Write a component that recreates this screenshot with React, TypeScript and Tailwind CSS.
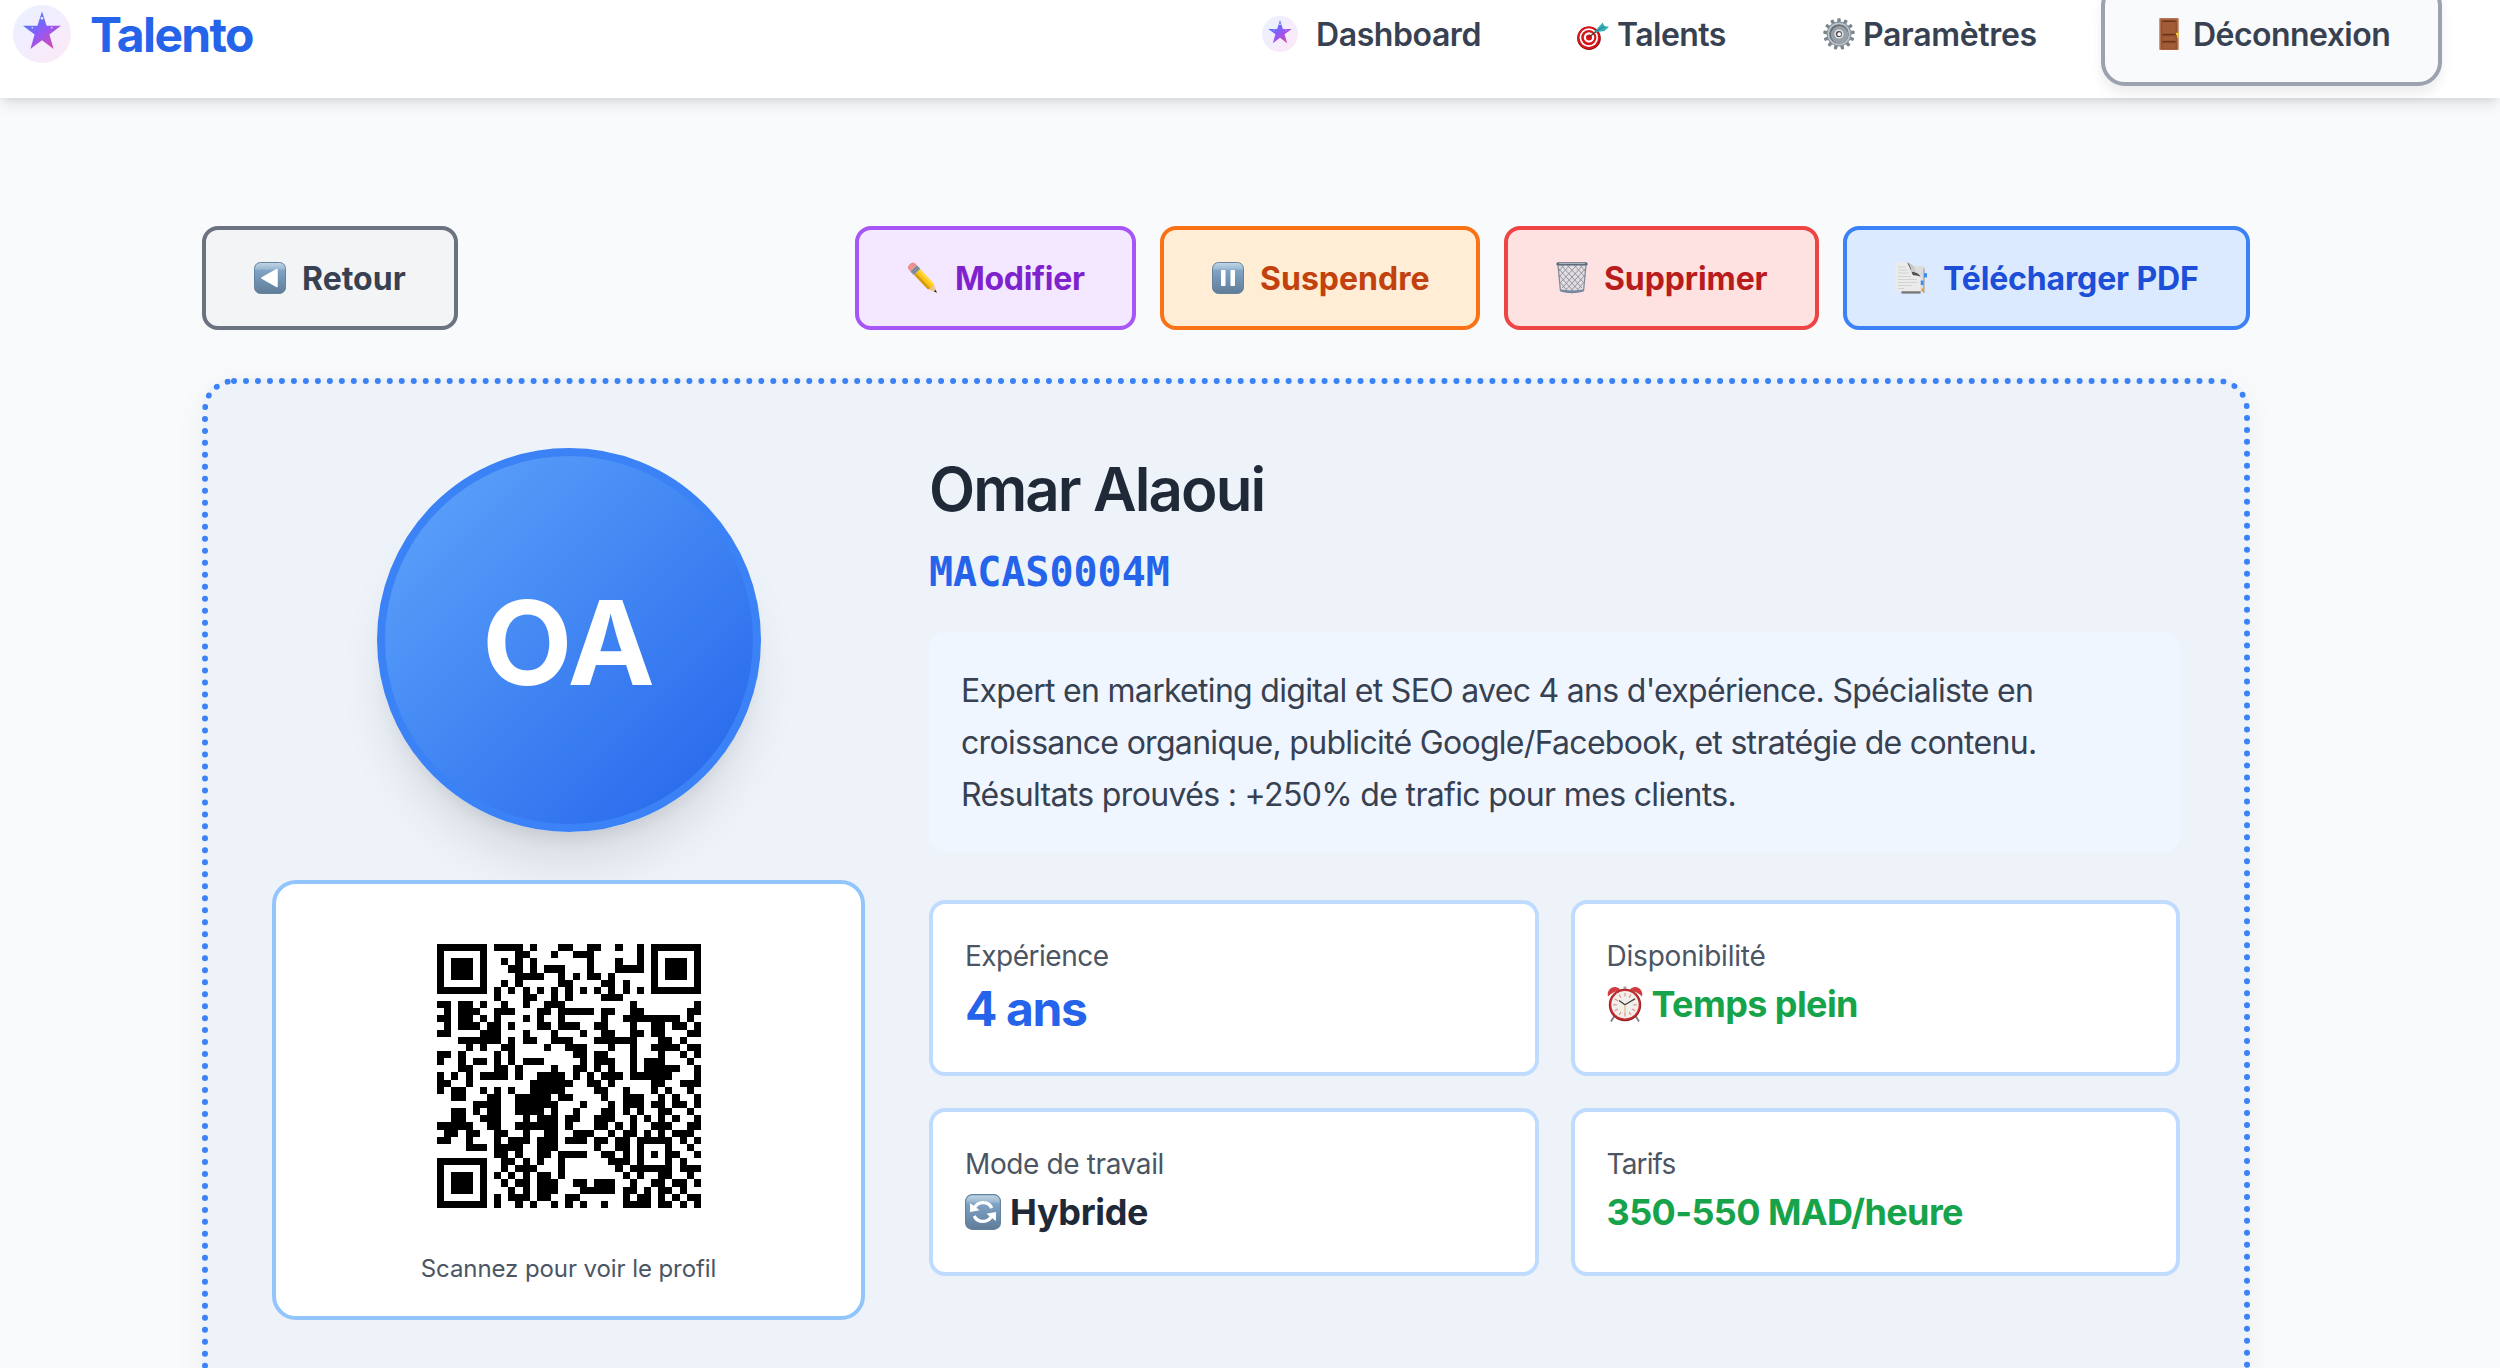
import type { ReactNode } from "react";

function StarBadge({ size, id }: { size: number; id: string }) {
  return (
    <svg width={size} height={size} viewBox="0 0 58 58" className="shrink-0">
      <defs>
        <linearGradient id={id + "-bg"} x1="0" y1="0" x2="1" y2="1">
          <stop offset="0" stopColor="#e8f1ff" />
          <stop offset="0.5" stopColor="#f3edfe" />
          <stop offset="1" stopColor="#fde8f3" />
        </linearGradient>
        <linearGradient id={id + "-fg"} x1="0.15" y1="0.1" x2="0.85" y2="1">
          <stop offset="0" stopColor="#3f82f8" />
          <stop offset="0.5" stopColor="#9259f7" />
          <stop offset="1" stopColor="#e0489f" />
        </linearGradient>
      </defs>
      <circle cx="29" cy="29" r="29" fill={`url(#${id}-bg)`} />
      <path
        d="M29 6.5 33.6 20.8H48L36.4 29.6 40.6 44 29 35.2 17.4 44 21.6 29.6 10 20.8H24.4Z"
        fill={`url(#${id}-fg)`}
      />
      <circle cx="29" cy="13.3" r="1.3" fill="#fff" opacity="0.9" />
      <circle cx="19.3" cy="22.7" r="1" fill="#fff" opacity="0.6" />
      <circle cx="38.7" cy="22.7" r="1" fill="#fff" opacity="0.6" />
    </svg>
  );
}

function Target() {
  return (
    <svg width="32" height="32" viewBox="0 0 32 32" className="shrink-0">
      <ellipse cx="12" cy="20.300" rx="11.800" ry="11.700" fill="#8f0f0f" />
      <ellipse cx="11.600" cy="19.800" rx="11.300" ry="11.300" fill="#d5161a" />
      <ellipse cx="11.800" cy="19.600" rx="9.300" ry="9.300" fill="#fff" />
      <ellipse cx="11.800" cy="19.600" rx="7.600" ry="7.600" fill="#d5161a" />
      <ellipse cx="12" cy="19.400" rx="5.200" ry="5.200" fill="#fff" />
      <ellipse cx="12" cy="19.400" rx="3" ry="3" fill="#d5161a" />
      <path d="M12 19 20 13" stroke="#5b3330" strokeWidth="1.400" />
      <path d="M17 14.500 22.500 8 25.800 4.500l1.400 3.500L32 8.700l-4.500 4.300-6 .8Z" fill="#33adb8" />
      <path d="M17.500 14.300 27.500 8.300" stroke="#1d7f8c" strokeWidth="1" />
    </svg>
  );
}

const TEETH = [0, 27.7, 55.4, 83.1, 110.8, 138.5, 166.2, 193.8, 221.5, 249.2, 276.9, 304.6, 332.3];

function Gear() {
  return (
    <svg width="32" height="32" viewBox="0 0 32 32" className="shrink-0">
      {TEETH.map((a) => (
        <rect key={a} x="14.300" y="0.200" width="3.400" height="6" rx="1" fill="#7c868f" transform={`rotate(${a} 16 16)`} />
      ))}
      <circle cx="16" cy="16" r="12.400" fill="#88929b" />
      <circle cx="16" cy="16" r="11.300" fill="#bfc6cc" />
      <circle cx="16" cy="16" r="9.800" fill="#697178" />
      <circle cx="16.600" cy="16.800" r="8.700" fill="#98a1a9" />
      <circle cx="16" cy="16" r="4.600" fill="#dfe4e8" />
      <circle cx="16" cy="16" r="3.100" fill="#54494a" />
      <circle cx="16.300" cy="16.200" r="1.900" fill="#fff" />
    </svg>
  );
}

function Door() {
  return (
    <svg width="32" height="32" viewBox="0 0 32 32" className="shrink-0">
      <rect x="6.300" y="0" width="19.400" height="32" rx="0.800" fill="#b87657" />
      <rect x="7.800" y="1.500" width="16.400" height="30" fill="#96512f" />
      <rect x="9.500" y="3" width="13" height="13" fill="#a35c38" />
      <path d="M9.500 3.300h13M9.500 16.500h13M9.500 23.700h13" stroke="#6b3218" strokeWidth="1.300" />
      <rect x="9.500" y="18.500" width="13" height="4" fill="#a35c38" />
      <rect x="9.500" y="25.500" width="13" height="5" fill="#a35c38" />
      <path d="M23 14.700h2.600v5H24v-2.800h-1z" fill="#f0c92b" />
    </svg>
  );
}

function Tile({ size, id, children }: { size: number; id: string; children: ReactNode }) {
  return (
    <svg width={size} height={size} viewBox="0 0 32 32" className="shrink-0">
      <defs>
        <linearGradient id={id} x1="0" y1="0" x2="0" y2="1">
          <stop offset="0" stopColor="#c3d7e6" />
          <stop offset="0.2" stopColor="#9dbad2" />
          <stop offset="0.260" stopColor="#7fa3c6" />
          <stop offset="1" stopColor="#5f7c97" />
        </linearGradient>
      </defs>
      <rect x="0.500" y="0.500" width="31" height="31" rx="6" fill={`url(#${id})`} stroke="#64839f" />
      {children}
    </svg>
  );
}

function Pencil() {
  return (
    <svg width="32" height="32" viewBox="0 0 32 32" className="shrink-0">
      <g transform="translate(3.800 3.300) rotate(46.500)">
        <path d="M29 -4.300 37.500 0 29 4.300Z" fill="#eec48f" />
        <path d="M34.800 -1.300 38 0 34.800 1.300Z" fill="#2c2c2c" />
        <path d="M9 -4.300H29L30.500 -2.700 29 -1.300H9Z" fill="#ffd83c" />
        <path d="M9 -1.600H29.500L30.500 0 29.500 1.600H9Z" fill="#fcc40f" />
        <path d="M9 1.400H29.500L30 2.800 29 4.300H9Z" fill="#d69a0a" />
        <rect x="3.800" y="-4.500" width="5.400" height="9" fill="#8d99a6" />
        <path d="M5.500 -4.500v9M7.500 -4.500v9" stroke="#5d6873" strokeWidth="0.700" />
        <path d="M4 -4.500H1.500a3.500 3.500 0 0 0-3 3.500v2a3.500 3.500 0 0 0 3 3.500H4Z" fill="#ef8f8f" />
      </g>
    </svg>
  );
}

function Trash() {
  return (
    <svg width="32" height="32" viewBox="0 0 32 32" className="shrink-0">
      <path d="M1.500 2h29L27.800 28.500q0 2.800-11.800 2.800T4.200 28.500Z" fill="#e3dde2" />
      <path
        d="M2 6 24 30M3 13 19 31M4 20l9 11M5 3l21 23M11 3l16 17M18 3l11 12M24 3l5 6M30 6 8 30M29 13 13 31M28 20l-9 11M27 3 6 26M21 3 5 20M14 3 3 15M8 3 3 9"
        stroke="#7d8592"
        strokeWidth="0.800"
        fill="none"
      />
      <path d="M2 3 4.400 28.500M30 3l-2.400 25.500" stroke="#848d9a" strokeWidth="1.300" />
      <path d="M4 27.300q12 2.600 24 0l-.3 2.200q-11.700 3.500-23.400 0Z" fill="#75879c" />
      <rect x="0.400" y="0.300" width="31.200" height="3.200" rx="1.500" fill="#5e6b7a" />
      <rect x="3" y="1" width="26" height="1" rx="0.500" fill="#aab4bf" />
    </svg>
  );
}

function Pages() {
  return (
    <svg width="32" height="32" viewBox="0 0 32 32" className="shrink-0">
      <path d="M10 4h19.500v26.500H10z" fill="#dcdcdc" />
      <path d="M28 6.500h1.800V31H28z" fill="#b5b5b5" />
      <rect x="29" y="11" width="3" height="4.500" rx="0.500" fill="#3c8ff0" />
      <rect x="25.500" y="18.500" width="3" height="4.500" fill="#3c8ff0" />
      <rect x="26.500" y="26.500" width="2.500" height="3" fill="#f39a3c" />
      <path d="M6.500 29h19v2.600h-19z" fill="#777" />
      <path d="M.5.300H12q3.800 1.700 4.500 9.500 7 .6 9 5v14.500H.5z" fill="#ebebeb" />
      <path d="M12 .3q3.800 1.700 4.500 9.500Q15 6 12 .3Z" fill="#555" />
      <path d="M12 .3q5.500 1 7.500 5.500 1.200 2.600.8 4.300-2-.6-3.800-.3Q15.800 2 12 .3Z" fill="#c9c9c9" />
      <path d="M16.500 9.800q7 .3 9 5-3-1.800-7.500-1.500Q17 11.500 16.500 9.800Z" fill="#4f4f4f" />
      <path d="M3 5h8M3 8h10M3 11h11M3 14.500h13M3 17.500h19M3 20.500h19M3 23.500h14M3 26.500h6" stroke="#d2d2d2" strokeWidth="1" />
    </svg>
  );
}

function Clock() {
  return (
    <svg width="36" height="36" viewBox="0 0 36 36" className="shrink-0">
      <path d="m8 29-4 6.500M28 29l4 6.500" stroke="#7d7d7d" strokeWidth="1.800" />
      <rect x="16.500" y="0.500" width="3" height="4" fill="#a8a8a8" />
      <path d="M1 10.500C-.5 5 4 0 9.500 1.200q3 .8 3.500 2.600Q5 6.500 1 10.500Z" fill="#cf3b3e" />
      <path d="M35 10.500C36.500 5 32 0 26.500 1.200q-3 .8-3.500 2.600 8 2.700 12 6.700Z" fill="#cf3b3e" />
      <circle cx="18" cy="19" r="16.200" fill="#8e1d22" />
      <circle cx="18" cy="18.700" r="15.600" fill="#c22b30" />
      <circle cx="18" cy="18.800" r="13.700" fill="#f1efec" />
      {[0, 30, 60, 90, 120, 150, 180, 210, 240, 270, 300, 330].map((a) => (
        <path key={a} d="M18 7v3.600" stroke="#ec8884" strokeWidth="1.100" transform={`rotate(${a} 18 18.800)`} />
      ))}
      <path d="M18 18.800 12 14.500M18 18.800l10-6" stroke="#3a3a3a" strokeWidth="1.200" />
      <path d="M18 18.800V28" stroke="#d9a53f" strokeWidth="0.800" />
    </svg>
  );
}

/* Dark modules of the 37x37 code, one entry per row, as inclusive column ranges. */
const QR_ROWS = [
  "0-6 8-11 13 17-18 21-22 25 28 30-36",
  "0 6 11-12 16 19-21 28 30 36",
  "0 2-4 6 9 11 13 21 25 28 30 32-34 36",
  "0 2-4 6 10-11 13 15-17 21 25-28 30 32-34 36",
  "0 2-4 6 11-14 17 19 21-22 24 30 32-34 36",
  "0 6 9 11 17-18 23-24 26 30 36",
  "0-6 8 10 12 14 16 18 20 22 24 26 28 30-36",
  "8 12-13 16 18 23-25",
  "0-1 3-4 6 9 12 15-17 27 36",
  "1 3-5 8-10 14-15 17-21 23-24 27-28 35-36",
  "0-1 3-4 6 8 12 14 17 23 26-33 35",
  "1 3-5 7-8 10 14-15 17-19 22-23 27 30-31 33-34 36",
  "0-1 6-8 12 16 20 23-24 27-28 30-31 35-36",
  "3-8 10 12-13 16-18 22-26 27 31-32 34",
  "4 6 9-10 15 18-20 24 27 30-33 35-36",
  "0-1 3 8 10 19-20 22-23 27 31 34 36",
  "0 3 5-6 8 10 12-14 20 22-24 27 29-31 35",
  "3-4 8-9 11 16 19-20 22 24 27 29-33 36",
  "0 2 4 6-9 11 14-17 19 21 23-25 27-32 36",
  "0-1 4 13-18 21 22 24 30-31 34-36",
  "0 2-3 6 8 10 13-17 22-23 26 30 32 35",
  "2-3 7-8 11-15 17-18 23 26-28 31 33 36",
  "5-8 11-16 20 24 26-28 30-31 33-34 36",
  "2-3 5 7-8 11-14 16 19 23-24 26 28 31-32 35",
  "2-3 6-8 12 14-16 18-19 22-24 27 29 31 33 36",
  "0-4 7-8 11-16 18 22-23 25 27 30-32 35-36",
  "1-2 4-5 8-9 12 15-16 19-21 24 26-27 29 31 33-35",
  "0-1 4 8 10-12 14-16 18-20 22-23 25-26 28-32 34 36",
  "4-6 8-11 14-16 22 25-26 28 32 35",
  "8-9 11 14-15 17-20 23-24 26 28 30 32-33 36",
  "0-6 9-10 12 14 17 24-26 28 32 34",
  "0 6 9 11-13 17 25 27-32 34-36",
  "0 2-4 6 8 10 12 14-15 17 26 28 31-32 35",
  "0 2-4 6 9 11-12 14-16 19-20 22-24 27 30-31 33-34 36",
  "0 2-4 6 10 12 14-16 20-24 26-27 29 31-32 34",
  "0 6 8 10-12 14-15 18-19 26 28-29 31 33 35-36",
  "0-6 8 11 13 16 18 20 23 26-29 31-32 34 36",
];

const QR_PATH = QR_ROWS.map((row, y) =>
  row
    .split(" ")
    .map((run) => {
      const [a, b] = run.split("-").map(Number);
      const w = (b ?? a) - a + 1;
      return `M${a} ${y}h${w}v1h-${w}z`;
    })
    .join("")
).join("");

function QrCode() {
  return (
    <svg width="264" height="264" viewBox="0 0 37 37" className="block" shapeRendering="crispEdges">
      <path d={QR_PATH} fill="#000" />
    </svg>
  );
}

function Action({ className, icon, children }: { className: string; icon: ReactNode; children: ReactNode }) {
  return (
    <button className={`flex h-[104px] shrink-0 items-center rounded-2xl border-4 pl-12 text-[32px] font-bold whitespace-nowrap ${className}`}>
      {icon}
      {children}
    </button>
  );
}

function Stat({ label, labelClass, children }: { label: string; labelClass: string; children: ReactNode }) {
  return (
    <div className="rounded-2xl border-4 border-[#bfdbfe] bg-white p-8">
      <div className={`text-[28px] leading-10 text-[#4b5563] ${labelClass}`}>{label}</div>
      {children}
    </div>
  );
}

export default function App() {
  return (
    <div className="h-[1368px] w-[2500px] overflow-hidden bg-[#f9fafb] font-['Inter',sans-serif]">
      <header className="relative flex h-[98px] items-start bg-white pl-[13px] shadow-[0_8px_14px_-2px_rgba(0,0,0,0.1),0_4px_8px_-4px_rgba(0,0,0,0.1)]">
        <div className="flex h-[68px] items-center">
          <StarBadge size={58} id="logo" />
          <span className="ml-[19px] pt-0.5 text-5xl font-bold tracking-[-1.66px] text-[#2563eb]">Talento</span>
        </div>
        <nav className="mr-[58px] ml-auto flex h-[68px] items-center text-[32px] font-semibold text-[#374151]">
          <a className="flex w-[315px] items-center">
            <StarBadge size={36} id="dash" />
            <span className="ml-[18px] pt-0.5 tracking-[-0.42px]">Dashboard</span>
          </a>
          <a className="flex w-[246px] items-center">
            <Target />
            <span className="ml-2 pt-0.5 tracking-[-0.55px]">Talents</span>
          </a>
          <a className="flex w-[278px] items-center">
            <Gear />
            <span className="ml-2 pt-0.5 tracking-[-0.33px]">Paramètres</span>
          </a>
          <button className="flex h-[104px] w-[341px] shrink-0 items-center rounded-3xl border-4 border-[#9ca3af] bg-[#f9fafb] pl-12 shadow-[0_8px_12px_rgba(0,0,0,0.07)]">
            <Door />
            <span className="ml-2 pt-0.5 tracking-[-0.55px]">Déconnexion</span>
          </button>
        </nav>
      </header>

      <main className="mr-[250px] ml-[202px] pt-32">
        <div className="flex gap-6">
          <Action
            className="mr-auto w-[256px] border-[#6b7280] bg-[#f3f4f6] text-[#374151]"
            icon={
              <Tile size={32} id="tile-back">
                <path d="M8 16 23 7.500v17Z" fill="#fff" stroke="#fff" strokeWidth="1.500" strokeLinejoin="round" />
              </Tile>
            }
          >
            <span className="ml-4 pt-0.5">Retour</span>
          </Action>
          <Action className="w-[281px] border-[#a855f7] bg-[#f3e8ff] text-[#7e22ce]" icon={<Pencil />}>
            <span className="ml-4 pt-0.5 tracking-[-0.29px]">Modifier</span>
          </Action>
          <Action
            className="w-[320px] border-[#f97316] bg-[#ffedd5] text-[#c2410c]"
            icon={
              <Tile size={32} id="tile-pause">
                <rect x="9" y="8" width="4.500" height="16" rx="0.800" fill="#fff" />
                <rect x="18.500" y="8" width="4.500" height="16" rx="0.800" fill="#fff" />
              </Tile>
            }
          >
            <span className="ml-4 pt-0.5">Suspendre</span>
          </Action>
          <Action className="w-[315px] border-[#ef4444] bg-[#fee2e2] text-[#b91c1c]" icon={<Trash />}>
            <span className="ml-4 pt-0.5 tracking-[-0.1px]">Supprimer</span>
          </Action>
          <Action className="w-[407px] border-[#3b82f6] bg-[#dbeafe] text-[#1d4ed8]" icon={<Pages />}>
            <span className="ml-4 pt-0.5 tracking-[-0.14px]">Télécharger PDF</span>
          </Action>
        </div>

        <section className="mt-12 flex h-[1300px] gap-16 rounded-[32px] border-[6px] border-dotted border-[#3b82f6] bg-[#eef3fa] p-16 shadow-[0_8px_30px_rgba(0,0,0,0.05)]">
          <div className="flex w-[593px] shrink-0 flex-col items-center">
            <div className="flex size-96 items-center justify-center rounded-full border-8 border-[#3b82f6] bg-linear-to-br from-[#60a5fa] to-[#2563eb] pt-[5px] text-[117px] font-bold text-white shadow-[0_40px_50px_-10px_rgba(0,0,0,0.1),0_16px_20px_-12px_rgba(0,0,0,0.1)]">
              OA
            </div>
            <div className="mt-12 flex h-[440px] w-full flex-col items-center rounded-3xl border-4 border-[#93c5fd] bg-white pt-[60px]">
              <QrCode />
              <p className="mt-[45px] text-2xl leading-8 tracking-[-0.08px] text-[#4b5563]">Scannez pour voir le profil</p>
            </div>
          </div>

          <div className="min-w-0 flex-1">
            <h1 className="mt-[11px] text-[60px] leading-none font-semibold tracking-[-1.91px] text-[#1f2937]">Omar Alaoui</h1>
            <p className="mt-[29px] font-['DejaVu_Sans_Mono',monospace] text-[40px] leading-[48px] font-bold text-[#2563eb]">
              MACAS0004M
            </p>
            <p className="mt-9 flex flex-col rounded-2xl bg-[#eff6ff] px-8 pt-[33px] pb-[31px] text-[32px] leading-[52px] tracking-[-0.7px] whitespace-nowrap text-[#374151]">
              <span>Expert en marketing digital et SEO avec 4 ans d'expérience. Spécialiste en</span>
              <span>croissance organique, publicité Google/Facebook, et stratégie de contenu.</span>
              <span className="tracking-[-0.66px]">Résultats prouvés : +250% de trafic pour mes clients.</span>
            </p>
            <div className="mt-12 grid grid-cols-2 gap-8">
              <Stat label="Expérience" labelClass="tracking-[-0.5px]">
                <div className="-mb-px pt-px text-5xl leading-16 font-bold tracking-[-1.39px] text-[#2563eb]">4 ans</div>
              </Stat>
              <Stat label="Disponibilité" labelClass="tracking-[-0.2px]">
                <div className="flex items-center gap-[9px] text-4xl leading-14 font-bold tracking-[-0.6px] text-[#16a34a]">
                  <Clock />
                  Temps plein
                </div>
              </Stat>
              <Stat label="Mode de travail" labelClass="tracking-[-0.38px]">
                <div className="flex items-center gap-[9px] text-4xl leading-14 font-bold tracking-[-0.35px] text-[#1f2937]">
                  <Tile size={36} id="tile-sync">
                    <path d="M8.200 12.800A8.600 8.600 0 0 1 23.800 12.400M23.800 19.200A8.600 8.600 0 0 1 8.200 19.600" stroke="#fff" strokeWidth="3" fill="none" />
                    <path d="M4.500 8V16L13 14.500ZM27.500 24V16L19 17.500Z" fill="#fff" />
                  </Tile>
                  Hybride
                </div>
              </Stat>
              <Stat label="Tarifs" labelClass="tracking-[-0.85px]">
                <div className="text-4xl leading-14 font-bold tracking-[-0.6px] text-[#16a34a]">350-550 MAD/heure</div>
              </Stat>
            </div>
          </div>
        </section>
      </main>
    </div>
  );
}
